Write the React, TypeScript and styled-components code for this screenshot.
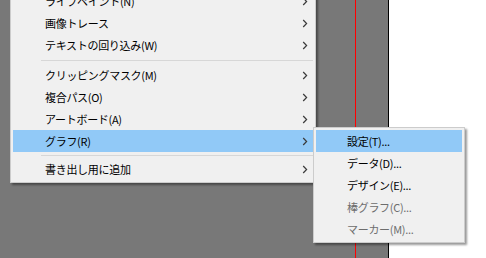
import styled, { createGlobalStyle } from "styled-components";

type Entry =
  | { kind: "item"; label: string; sub?: boolean; active?: boolean }
  | { kind: "sep"; size: number };

const mainEntries: Entry[] = [
  { kind: "item", label: "ライブペイント(N)", sub: true },
  { kind: "item", label: "画像トレース", sub: true },
  { kind: "item", label: "テキストの回り込み(W)", sub: true },
  { kind: "sep", size: 8 },
  { kind: "item", label: "クリッピングマスク(M)", sub: true },
  { kind: "item", label: "複合パス(O)", sub: true },
  { kind: "item", label: "アートボード(A)", sub: true },
  { kind: "item", label: "グラフ(R)", sub: true, active: true },
  { kind: "sep", size: 6 },
  { kind: "item", label: "書き出し用に追加", sub: true },
];

const graphEntries = [
  { label: "設定(T)...", active: true, disabled: false },
  { label: "データ(D)...", active: false, disabled: false },
  { label: "デザイン(E)...", active: false, disabled: false },
  { label: "棒グラフ(C)...", active: false, disabled: true },
  { label: "マーカー(M)...", active: false, disabled: true },
];

const Chevron = () => (
  <svg width="6" height="9" viewBox="0 0 6 9">
    <path d="M1.2 1 L4.6 4.5 L1.2 8" fill="none" stroke="#3a3a3a" strokeWidth="1.2" />
  </svg>
);

export default function App() {
  return (
    <>
      <GlobalStyle />
      <Workspace>
        <Canvas>
          <Guide />
        </Canvas>
        <Artboard />
        <Menu>
          {mainEntries.map((e, i) =>
            e.kind === "sep" ? (
              <Separator key={i} $size={e.size} />
            ) : (
              <Item key={i} $active={!!e.active}>
                <Label>{e.label}</Label>
                {e.sub && (
                  <Arrow>
                    <Chevron />
                  </Arrow>
                )}
                {e.active && (
                  <SubMenu>
                    {graphEntries.map((s) => (
                      <SubItem key={s.label} $active={s.active} $disabled={s.disabled}>
                        {s.label}
                      </SubItem>
                    ))}
                  </SubMenu>
                )}
              </Item>
            ),
          )}
        </Menu>
      </Workspace>
    </>
  );
}

const GlobalStyle = createGlobalStyle`
  html, body {
    margin: 0;
    padding: 0;
    overflow: hidden;
  }
  body {
    font-family: "Noto Sans CJK JP", "Noto Sans", sans-serif;
    font-size: 11px;
    letter-spacing: -0.3px;
  }
`;

const Workspace = styled.div`
  position: relative;
  width: 486px;
  height: 258px;
  display: flex;
  overflow: hidden;
`;

const Canvas = styled.div`
  position: relative;
  width: 388px;
  background: #787878;
  border-right: 1px solid #000;
`;

const Guide = styled.div`
  position: absolute;
  left: 355px;
  top: 0;
  bottom: 0;
  width: 1px;
  background: #ff0000;
`;

const Artboard = styled.div`
  flex: 1;
  background: #ffffff;
`;

const Menu = styled.div`
  position: absolute;
  left: 10px;
  top: -13px;
  width: 306px;
  box-sizing: border-box;
  padding: 2px;
  background: #f0f0f0;
  border: 1px solid #cccccc;
  box-shadow: 2px 2px 2px rgba(0, 0, 0, 0.4);
`;

const Item = styled.div<{ $active: boolean }>`
  position: relative;
  height: 22px;
  display: flex;
  align-items: center;
  padding-left: 32px;
  background: ${({ $active }) => ($active ? "#91c9f7" : "transparent")};
  color: #000;
`;

const Label = styled.span`
  line-height: 22px;
  white-space: nowrap;
`;

const Arrow = styled.span`
  margin-left: auto;
  margin-right: 5px;
  display: flex;
  align-items: center;
`;

const Separator = styled.div<{ $size: number }>`
  height: ${({ $size }) => $size}px;
  display: flex;
  align-items: center;
  padding-left: 28px;

  &::after {
    content: "";
    flex: 1;
    height: 1px;
    background: #d7d7d7;
  }
`;

const SubMenu = styled.div`
  position: absolute;
  left: 100%;
  top: -3px;
  width: 152px;
  box-sizing: border-box;
  padding: 2px;
  background: #f0f0f0;
  border: 1px solid #cccccc;
  box-shadow: 2px 2px 2px rgba(0, 0, 0, 0.4);
`;

const SubItem = styled.div<{ $active: boolean; $disabled: boolean }>`
  height: 22px;
  line-height: 22px;
  padding-left: 31px;
  white-space: nowrap;
  background: ${({ $active }) => ($active ? "#91c9f7" : "transparent")};
  color: ${({ $disabled }) => ($disabled ? "#6d6d6d" : "#000")};
`;
